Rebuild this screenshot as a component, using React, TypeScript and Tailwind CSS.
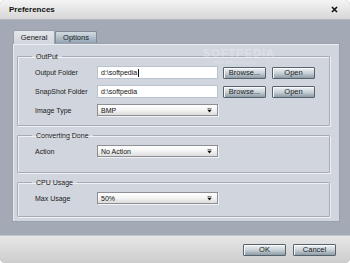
import React from "react";

const font = { fontFamily: '"Liberation Sans", Arial, sans-serif' };

function Btn({ children, w = "w-[43px]" }: { children: React.ReactNode; w?: string }) {
  return (
    <div
      className={`${w} h-[12px] flex items-center justify-center border border-[#56626c] rounded-[1px] bg-gradient-to-b from-[#eef2f4] via-[#c9d2d8] to-[#8f9ca6] text-[7.5px] text-[#1a1a1a] leading-none shadow-[inset_1px_1px_0_#f8fafb]`}
    >
      {children}
    </div>
  );
}

function Arrow() {
  return (
    <svg width="5" height="5" viewBox="0 0 5 5" className="block">
      <rect x="0.5" y="0.5" width="4" height="0.8" fill="#111" />
      <path d="M0.5 2 H4.5 L2.5 4.4 Z" fill="#111" />
    </svg>
  );
}

function Select({ value }: { value: string }) {
  return (
    <div className="w-[121px] h-[12px] flex items-center justify-between border border-[#8c9096] bg-gradient-to-b from-[#ffffff] via-[#f4f4f4] to-[#dcdcdc] pl-[3px] pr-[5px] text-[7px] text-[#111] leading-none shadow-[1px_1px_0_#f2f3f5]">
      <span>{value}</span>
      <Arrow />
    </div>
  );
}

function Input({ value, caret }: { value: string; caret?: boolean }) {
  return (
    <div className="w-[121px] h-[13px] flex items-center border border-[#b9c3cf] bg-white pl-[3px] text-[7px] text-[#111] leading-none">
      <span>{value}</span>
      {caret && <span className="ml-[1px] w-px h-[8px] bg-[#111]" />}
    </div>
  );
}

function Group({
  label,
  children,
  className = "",
}: {
  label: string;
  children: React.ReactNode;
  className?: string;
}) {
  return (
    <fieldset
      className={`border border-[#a7acb4] shadow-[1px_1px_0_#eef0f3,inset_1px_1px_0_#eef0f3] rounded-[1px] ${className}`}
    >
      <legend className="-ml-[3px] px-[4px] text-[7px] leading-none text-[#1a1a1a]">{label}</legend>
      {children}
    </fieldset>
  );
}

function Row({ label, children }: { label: string; children: React.ReactNode }) {
  return (
    <div className="flex items-center">
      <div className="w-[62px] text-[7px] text-[#1a1a1a] leading-none">{label}</div>
      {children}
    </div>
  );
}

export default function App() {
  return (
    <div
      style={font}
      className="w-[350px] h-[263px] overflow-hidden rounded-t-[5px] rounded-b-[5px] bg-[#a3aab5] flex flex-col relative"
    >
      {/* Title bar */}
      <div className="h-[20px] shrink-0 flex items-center justify-between bg-gradient-to-b from-[#f4f4f4] to-[#d7d7d7] border-b border-[#b5b9bf] pl-[9px] pr-[12px]">
        <span className="text-[8px] font-bold text-[#111] leading-none">Preferences</span>
        <svg width="7" height="7" viewBox="0 0 7 7" className="block">
          <path d="M1 1 L6 6 M6 1 L1 6" stroke="#111" strokeWidth="1.6" />
        </svg>
      </div>

      {/* Body */}
      <div className="h-[215px] shrink-0 pl-[12px] pr-[10px] pt-[10px]">
        <div className="flex items-end pl-[1px] relative z-10">
          <div className="w-[42px] h-[14px] -mb-px flex items-center justify-center bg-gradient-to-b from-[#e4e7eb] to-[#d1d5dd] border border-b-0 border-[#9aa1aa] rounded-t-[2px] text-[7.5px] text-[#1a1a1a] leading-none">
            General
          </div>
          <div className="w-[42px] h-[12px] flex items-center justify-center bg-gradient-to-b from-[#d3dbe2] via-[#b3c0cb] to-[#93a3b1] border border-b-0 border-[#7f8b96] rounded-t-[2px] text-[7.5px] text-[#1a1a1a] leading-none">
            Options
          </div>
        </div>
        <div className="h-[179px] bg-[#d1d5dd] border border-[#9aa1aa] shadow-[inset_1px_1px_0_#e9ecf0] pl-[4px] pr-[9px] pt-[9px] flex flex-col gap-[6px] relative">
          <Group label="OutPut" className="h-[73px] pl-[17px] pt-[6px]">
            <div className="flex flex-col gap-[6px]">
              <div className="flex items-center">
                <Row label="Output Folder">
                  <Input value="d:\softpedia" caret />
                </Row>
                <div className="ml-[5px] flex gap-[6px]">
                  <Btn>Browse...</Btn>
                  <Btn>Open</Btn>
                </div>
              </div>
              <div className="flex items-center">
                <Row label="SnapShot Folder">
                  <Input value="d:\softpedia" />
                </Row>
                <div className="ml-[5px] flex gap-[6px]">
                  <Btn>Browse...</Btn>
                  <Btn>Open</Btn>
                </div>
              </div>
              <Row label="Image Type">
                <Select value="BMP" />
              </Row>
            </div>
          </Group>
          <Group label="Converting Done" className="h-[41px] pl-[17px] pt-[6px]">
            <Row label="Action">
              <Select value="No Action" />
            </Row>
          </Group>
          <Group label="CPU Usage" className="h-[38px] pl-[17px] pt-[6px]">
            <Row label="Max Usage">
              <Select value="50%" />
            </Row>
          </Group>
          {/* watermark */}
          <div className="absolute left-[190px] top-[4px] text-[11px] font-bold tracking-[1px] text-white opacity-25 leading-none pointer-events-none">
            SOFTPEDIA
          </div>
          <div className="absolute left-[200px] top-[16px] text-[5px] text-white opacity-25 leading-none pointer-events-none">
            www.softpedia.com
          </div>
        </div>
      </div>

      {/* Footer */}
      <div className="flex-1 bg-gradient-to-b from-[#e6e6e6] to-[#cdcdcd] border-t border-[#c2c5ca] flex items-start justify-end gap-[7px] pr-[14px] pt-[8px]">
        <Btn>OK</Btn>
        <Btn>Cancel</Btn>
      </div>
    </div>
  );
}
